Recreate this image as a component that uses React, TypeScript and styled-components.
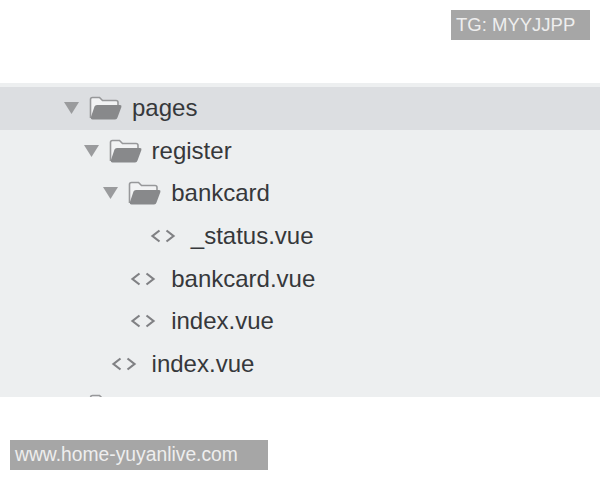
import { FunctionComponent } from "react";
import styled, { createGlobalStyle } from "styled-components";

const GlobalStyle = createGlobalStyle`
  html, body {
    margin: 0;
    padding: 0;
    background: #fff;
  }
`;

const Page = styled.div`
  width: 600px;
  height: 480px;
  overflow: hidden;
  display: flex;
  flex-direction: column;
  font-family: "Liberation Sans", Arial, sans-serif;
`;
const TopBar = styled.div`
  height: 83px;
  box-sizing: border-box;
  padding: 10px 10px 0 0;
  display: flex;
  justify-content: flex-end;
  align-items: flex-start;
`;
const Tag = styled.div<{ $width: number; $size: number }>`
  width: ${(p) => p.$width}px;
  height: 30px;
  box-sizing: border-box;
  padding-left: 5px;
  background: #a6a6a6;
  color: #eeeeee;
  font-size: ${(p) => p.$size}px;
  line-height: 30px;
  white-space: nowrap;
`;
const Tree = styled.div`
  height: 314px;
  overflow: hidden;
  box-sizing: border-box;
  padding-top: 4px;
  background: #edeff0;
`;
const Row = styled.div<{ $depth: number; $selected?: boolean; $file?: boolean }>`
  height: 42.6px;
  display: flex;
  align-items: center;
  padding-left: ${(p) => 64 + p.$depth * 19.6 + (p.$file ? 27 : 0)}px;
  background: ${(p) => (p.$selected ? "#dcdee1" : "transparent")};
`;
const Arrow = styled.svg`
  width: 15px;
  height: 12px;
  margin-right: 10px;
  flex: none;
`;
const Folder = styled.svg`
  width: 33px;
  height: 24px;
  margin-right: 10px;
  flex: none;
`;
const Code = styled.svg`
  width: 26px;
  height: 16px;
  margin-right: 15px;
  flex: none;
`;
const Name = styled.span`
  font-size: 24px;
  color: #36383b;
  white-space: nowrap;
`;
const Footer = styled.div`
  padding: 43px 0 0 10px;
`;

type Item = { name: string; depth: number; file?: boolean; selected?: boolean };

const items: Item[] = [
  { name: "pages", depth: 0, selected: true },
  { name: "register", depth: 1 },
  { name: "bankcard", depth: 2 },
  { name: "_status.vue", depth: 3, file: true },
  { name: "bankcard.vue", depth: 2, file: true },
  { name: "index.vue", depth: 2, file: true },
  { name: "index.vue", depth: 1, file: true },
];

const FolderIcon: FunctionComponent = () => (
  <Folder viewBox="0 0 33 24">
    <path
      d="M1.5 22V3.5Q1.5 1.5 3.5 1.5H10.5L13.5 4.5H27Q29 4.5 29 6.5V9"
      fill="#f2f3f4"
      stroke="#97989a"
      strokeWidth="1.6"
    />
    <path
      d="M3.5 23.5Q1.5 23.5 1.8 21.5L5.5 10.5Q6 9 8 9H31Q33 9 32.4 11L28.5 21.5Q28 23.5 26 23.5Z"
      fill="#88898b"
    />
  </Folder>
);

const App: FunctionComponent = () => {
  return (
    <Page>
      <GlobalStyle />
      <TopBar>
        <Tag $width={139} $size={18.5}>TG: MYYJJPP</Tag>
      </TopBar>
      <Tree>
        {items.map((item, i) => (
          <Row key={i} $depth={item.depth} $selected={item.selected} $file={item.file}>
            {item.file ? (
              <Code viewBox="0 0 26 16">
                <path
                  d="M9.5 2.5L2.5 8L9.5 13.5M16.5 2.5L23.5 8L16.5 13.5"
                  fill="none"
                  stroke="#808184"
                  strokeWidth="2.2"
                />
              </Code>
            ) : (
              <>
                <Arrow viewBox="0 0 15 12">
                  <path d="M0 0H15L7.5 12Z" fill="#9a9b9d" />
                </Arrow>
                <FolderIcon />
              </>
            )}
            <Name>{item.name}</Name>
          </Row>
        ))}
        <Row $depth={0}>
          <Arrow as="span" />
          <FolderIcon />
        </Row>
      </Tree>
      <Footer>
        <Tag $width={258} $size={19.3}>www.home-yuyanlive.com</Tag>
      </Footer>
    </Page>
  );
};

export default App;
